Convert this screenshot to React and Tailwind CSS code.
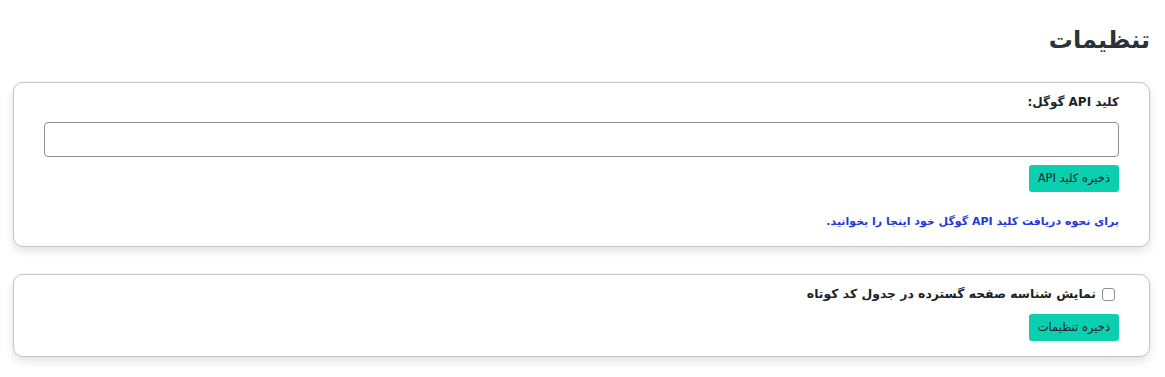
import { useState } from 'react';

const Card = ({ children, className = '' }) => (
    <div className={`bg-white border border-[#c3c4c7] rounded-[10px] shadow-[0_4px_10px_rgba(0,0,0,0.12)] px-[30px] ${className}`}>
        {children}
    </div>
);

const App = () => {
    const [apiKey, setApiKey] = useState('');
    const [showId, setShowId] = useState(false);

    return (
        <div dir="rtl" className="min-h-screen bg-white pl-[13px] pr-[15px] pt-[20px] text-[#1d2327]" style={{ fontFamily: '"DejaVu Sans", "Noto Sans", sans-serif' }}>
            <h1 className="text-[24px] font-bold leading-[40px] text-[#2c3338]">تنظیمات</h1>

            {/* API key */}
            <Card className="mt-[22px] pt-[9px] pb-[14px]">
                <label className="block text-[12px] font-bold leading-[20px]">کلید API گوگل:</label>
                <input
                    type="text"
                    value={apiKey}
                    onChange={e => setApiKey(e.target.value)}
                    className="block w-full h-[35px] mt-[10px] border border-[#8c8f94] rounded-[4px] bg-white px-2 text-[13px] outline-none"
                />
                <button className="mt-[8px] h-[27px] px-[9px] rounded-[3px] bg-[#0ccfb0] text-[11.5px] text-[#1d2327] font-medium">
                    ذخیره کلید API
                </button>
                <p className="mt-[20px] text-[11px] font-bold leading-[20px]">
                    <a href="#" className="text-[#2536d8]">برای نحوه دریافت کلید API گوگل خود اینجا را بخوانید.</a>
                </p>
            </Card>

            {/* Display options */}
            <Card className="mt-[27px] pt-[9px] pb-[15px]">
                <label className="flex items-center gap-[6px] text-[12.4px] font-bold leading-[20px] mr-[4px]">
                    <input
                        type="checkbox"
                        checked={showId}
                        onChange={e => setShowId(e.target.checked)}
                        className="w-[13px] h-[13px] appearance-none border border-[#8c8f94] rounded-[3px] bg-white"
                    />
                    نمایش شناسه صفحه گسترده در جدول کد کوتاه
                </label>
                <button className="mt-[10px] h-[27px] px-[9px] rounded-[3px] bg-[#0ccfb0] text-[11.5px] text-[#1d2327] font-medium">
                    ذخیره تنظیمات
                </button>
            </Card>
        </div>
    );
};

export default App;
